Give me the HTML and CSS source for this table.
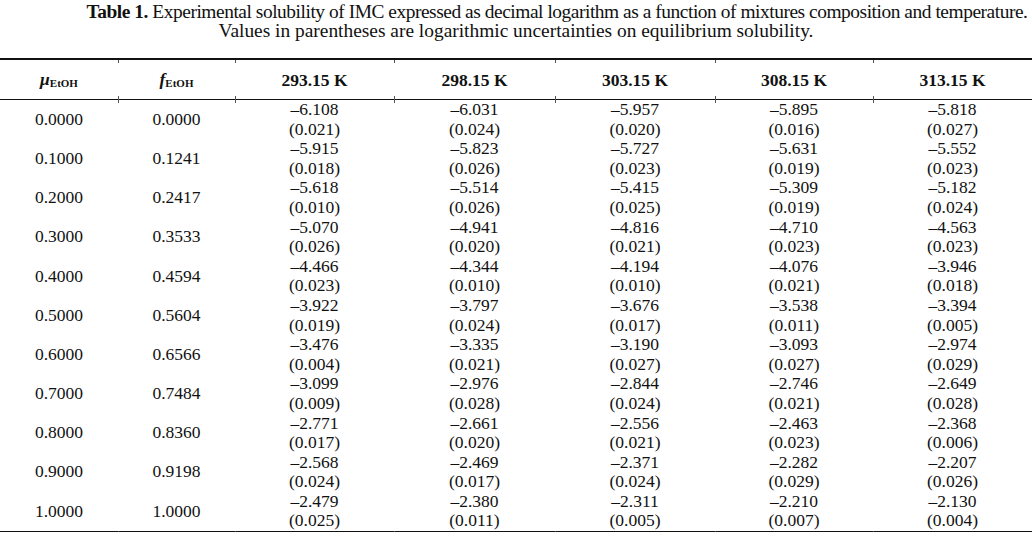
FILE: index.html
```html
<!DOCTYPE html>
<html>
<head>
<meta charset="utf-8">
<link rel="stylesheet" href="styles.css">
</head>
<body>
<div class="caption">
  <div class="cap-line cap-first"><b>Table 1.</b> Experimental solubility of IMC expressed as decimal logarithm as a function of mixtures composition and temperature.</div>
  <div class="cap-line">Values in parentheses are logarithmic uncertainties on equilibrium solubility.</div>
</div>
<table class="data">
  <colgroup>
    <col class="c1"><col class="c2"><col class="c3"><col class="c4"><col class="c5"><col class="c6"><col class="c7">
  </colgroup>
  <thead>
    <tr>
      <th><i>μ</i><span class="sub">EtOH</span></th>
      <th><i>f</i><span class="sub">EtOH</span></th>
      <th>293.15 K</th>
      <th>298.15 K</th>
      <th>303.15 K</th>
      <th>308.15 K</th>
      <th>313.15 K</th>
    </tr>
  </thead>
  <tbody>
    <tr><td>0.0000</td><td>0.0000</td><td>–6.108<br>(0.021)</td><td>–6.031<br>(0.024)</td><td>–5.957<br>(0.020)</td><td>–5.895<br>(0.016)</td><td>–5.818<br>(0.027)</td></tr>
    <tr><td>0.1000</td><td>0.1241</td><td>–5.915<br>(0.018)</td><td>–5.823<br>(0.026)</td><td>–5.727<br>(0.023)</td><td>–5.631<br>(0.019)</td><td>–5.552<br>(0.023)</td></tr>
    <tr><td>0.2000</td><td>0.2417</td><td>–5.618<br>(0.010)</td><td>–5.514<br>(0.026)</td><td>–5.415<br>(0.025)</td><td>–5.309<br>(0.019)</td><td>–5.182<br>(0.024)</td></tr>
    <tr><td>0.3000</td><td>0.3533</td><td>–5.070<br>(0.026)</td><td>–4.941<br>(0.020)</td><td>–4.816<br>(0.021)</td><td>–4.710<br>(0.023)</td><td>–4.563<br>(0.023)</td></tr>
    <tr><td>0.4000</td><td>0.4594</td><td>–4.466<br>(0.023)</td><td>–4.344<br>(0.010)</td><td>–4.194<br>(0.010)</td><td>–4.076<br>(0.021)</td><td>–3.946<br>(0.018)</td></tr>
    <tr><td>0.5000</td><td>0.5604</td><td>–3.922<br>(0.019)</td><td>–3.797<br>(0.024)</td><td>–3.676<br>(0.017)</td><td>–3.538<br>(0.011)</td><td>–3.394<br>(0.005)</td></tr>
    <tr><td>0.6000</td><td>0.6566</td><td>–3.476<br>(0.004)</td><td>–3.335<br>(0.021)</td><td>–3.190<br>(0.027)</td><td>–3.093<br>(0.027)</td><td>–2.974<br>(0.029)</td></tr>
    <tr><td>0.7000</td><td>0.7484</td><td>–3.099<br>(0.009)</td><td>–2.976<br>(0.028)</td><td>–2.844<br>(0.024)</td><td>–2.746<br>(0.021)</td><td>–2.649<br>(0.028)</td></tr>
    <tr><td>0.8000</td><td>0.8360</td><td>–2.771<br>(0.017)</td><td>–2.661<br>(0.020)</td><td>–2.556<br>(0.021)</td><td>–2.463<br>(0.023)</td><td>–2.368<br>(0.006)</td></tr>
    <tr><td>0.9000</td><td>0.9198</td><td>–2.568<br>(0.024)</td><td>–2.469<br>(0.017)</td><td>–2.371<br>(0.024)</td><td>–2.282<br>(0.029)</td><td>–2.207<br>(0.026)</td></tr>
    <tr class="last"><td>1.0000</td><td>1.0000</td><td>–2.479<br>(0.025)</td><td>–2.380<br>(0.011)</td><td>–2.311<br>(0.005)</td><td>–2.210<br>(0.007)</td><td>–2.130<br>(0.004)</td></tr>
  </tbody>
</table>
</body>
</html>
```

FILE: styles.css
```css
html, body {
  margin: 0;
  padding: 0;
  background: #fff;
}
body {
  width: 1032px;
  font-family: "Liberation Serif", "Times New Roman", serif;
  color: #111;
  font-size: 17.5px;
}
.caption {
  padding-top: 2px;
  height: 58px;
  box-sizing: border-box;
  font-size: 19.4px;
}
.cap-line {
  text-align: center;
  line-height: 19px;
  white-space: nowrap;
}
.cap-first {
  padding-left: 82px;
  letter-spacing: -0.45px;
}
.data {
  width: 1032px;
  border-collapse: collapse;
  table-layout: fixed;
  border-top: 2px solid #111;
  border-bottom: 1px solid #111;
}
.c1 { width: 118px; }
.c2 { width: 117px; }
.c3 { width: 159px; }
.c4 { width: 161px; }
.c5 { width: 160px; }
.c6 { width: 158px; }
.c7 { width: 159px; }
thead th {
  position: relative;
  height: 39px;
  padding: 0;
  font-weight: bold;
  text-align: center;
  vertical-align: middle;
  border-bottom: 1px solid #111;
  line-height: 20px;
}
thead th + th::before,
thead th + th::after,
tbody tr.last td + td::after {
  content: "";
  position: absolute;
  left: 0;
  width: 1px;
  background: #555;
}
thead th + th::before {
  top: 0;
  height: 3px;
}
thead th + th::after {
  bottom: -4px;
  height: 7px;
}
.sub {
  font-size: 11px;
  position: relative;
  top: 2px;
}
tbody td {
  padding: 0;
  text-align: center;
  vertical-align: middle;
  line-height: 19.6px;
  height: 39.2px;
}
tbody tr.last td {
  position: relative;
}
tbody tr.last td + td::after {
  bottom: -6px;
  height: 6px;
}
```
